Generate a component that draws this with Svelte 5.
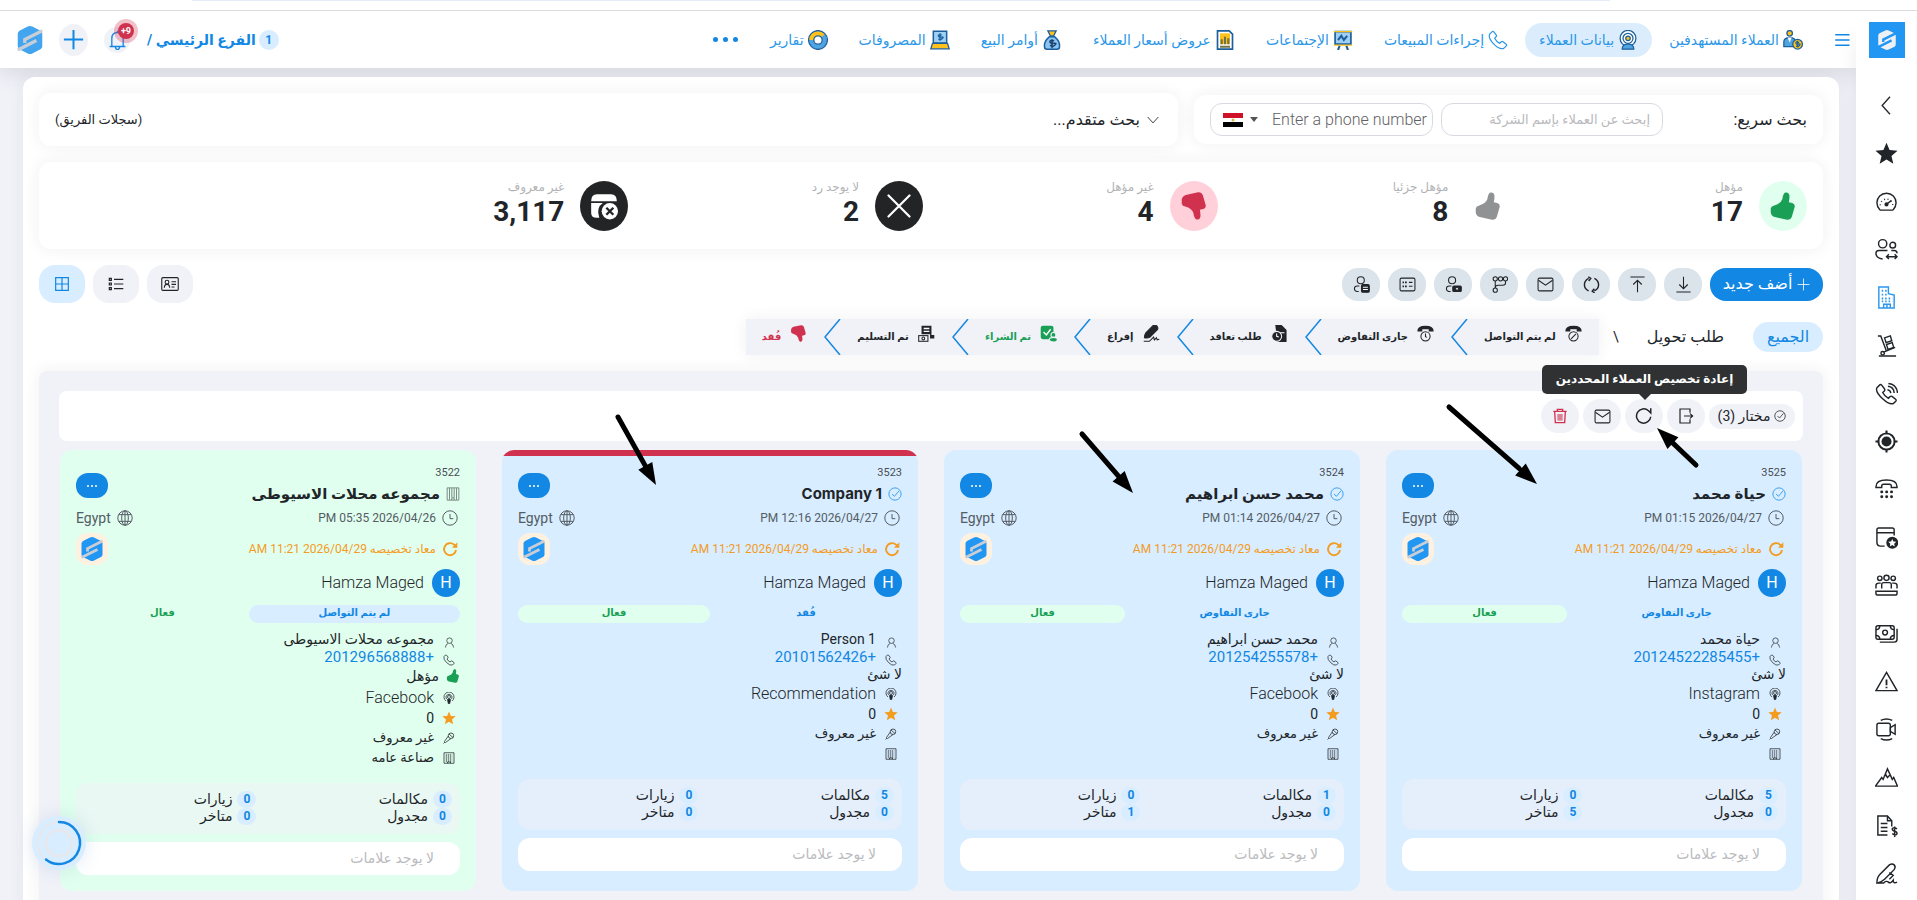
<script lang="ts">
	type Nav = { label: string; icon: string; active?: boolean };

	const icons: Record<string, string> = {
		chevronLeft: '<path d="M16 2 7 12l9 10"/>',
		chevronDown: '<path d="m3 7 9 10 9-10"/>',
		star: '<path fill="currentColor" stroke="none" d="m12 .8 3.2 7.6 8.3.7-6.3 5.4 1.9 8.1-7.1-4.3-7.1 4.3 1.9-8.1L.5 9.1l8.3-.7z"/>',
		gauge: '<path d="M5 20.500A10 10 0 1 1 19 20.500Q18.500 21 17 21H7Q5.500 21 5 20.500z"/><path d="m12 15 5-4"/><circle cx="12" cy="15" r="1.400" fill="currentColor"/><path stroke-dasharray="1 2.700" d="M5.500 16a6.500 6.500 0 1 1 13 0"/>',
		users: '<circle cx="8" cy="6" r="4.300"/><circle cx="18.500" cy="7.500" r="3"/><path d="M13 13H4q-3 0-3 3 0 5 7 6M17 13h3q3 0 3 3M12 19.500h11M14.500 17 12 19.500l2.500 2.500M20.500 17l2.500 2.500-2.500 2.500"/>',
		building: '<path d="M4 1h10v7l6 1.500V23H4zM9 23v-4h7v4M12.500 19v4"/><path stroke-width="2" stroke-dasharray="1.600 2" d="M7 5h7M7 9h7M7 13h11M7 16h11"/>',
		cart: '<path d="M3 2h3l6 16M4 23h18M9 19l12-5"/><circle cx="8" cy="20" r="1.800"/><path d="m10 4 6-2 1.500 5-6 2zM12 11l6-2 1.500 5-6 2z"/>',
		callWave: '<path d="M2 6 5 3q1-.8 2 .3l3 4q.6 1-.3 2L8 11q2 4 6 6l1.700-1.800q1-.8 2-.2l3.800 3q1 1 .2 2l-2.700 2.500Q15 24 8 17.500 0 10 2 6zM13 8q3 .3 3.500 3.500M13.500 4.500q6 .5 6.500 7M14 1.500q8.500.7 9.500 10"/>',
		target: '<circle cx="12" cy="12" r="8.500" stroke-width="2"/><circle cx="12" cy="12" r="4.500" fill="currentColor"/><path stroke-width="2.200" d="M12 .5v4M12 19.500v4M.5 12h4M19.500 12h4"/>',
		deskPhone: '<path d="M1 9q0-7 11-7t11 7v1h-6V8q0-1.500-2-1.500H9Q7 6.500 7 8v2H1z"/><path stroke-width="3" stroke-linecap="round" stroke-dasharray=".1 5" d="M7 14.500h11M7 19.500h11"/>',
		boxStar: '<path d="M10 21H6q-4 0-4-4V4q0-2 2-2h14q2 0 2 2v6M2 7h18"/><circle cx="18" cy="17.500" r="5.500" fill="currentColor"/><path fill="#fff" stroke="none" d="m18 13.500 1.200 2.700 3 .3-2.200 2 .6 3-2.600-1.600-2.600 1.600.6-3-2.200-2 3-.3z"/>',
		team: '<circle cx="5" cy="4.500" r="2.300"/><circle cx="12" cy="4" r="2.700"/><circle cx="19" cy="4.500" r="2.300"/><path d="M1 15v-3q0-2.500 3-2.500h2M23 15v-3q0-2.500-3-2.500h-2M7 15v-4q0-2 2-2h6q2 0 2 2v4M1 18h22v2q0 2-2 2H3q-2 0-2-2z"/>',
		money: '<rect x="1" y="4" width="19" height="14" rx="2"/><circle cx="10.500" cy="11" r="2.500"/><path d="M1 8q4 0 4-4M1 14q4 0 4 4M20 8q-4 0-4-4M20 14q-4 0-4 4M23 7v11q0 3-3 3H5"/>',
		warning: '<path d="M12 2.500 23 21.500H1z"/><path stroke-width="1.900" d="M12 10v6M12 17.500v1.500"/>',
		video: '<rect x="2" y="5.500" width="14" height="13" rx="2"/><path d="m16 10 5-3v10l-5-3zM6 2.500q6-3 12 0M6 21.500q6 3 12 0"/>',
		mountain: '<path d="M.5 21 7 12l1.500 2L13 3l5 11 1.500-2 4 9zM9 11l2.500-1.500L13 12l2.500-2.500L17 11"/>',
		invoice: '<path d="M13 22H3V2h10l4.500 5v6M13 2v5h4.500M6 10h7M6 14h7M6 18h7M23 15.500q-4-2.500-5 0 0 2 2.500 2.500T23 20.500q-1 2.500-5 0M20.500 13v11"/>',
		pen: '<path d="M2 22q0-6 3-9L15 3q3-2 5 0t0 5L10 18q-3 3-8 4zM15 11l4 3-4 4M2 22h7q3-3 5-1t5-2q0 4 4 2"/>',
		menu: '<path stroke-width="2" d="M3 5h19M3 12h19M3 19h19"/>',
		plus: '<path d="M12 1v22M1 12h22"/>',
		bell: '<path d="M3 20h18M5.500 20v-9q0-7 6.500-7t6.500 7v9M12 2v2M9.500 20.500q.5 3 2.500 3t2.500-3"/>',
		phone: '<path d="M2 5 5 2q1-.8 2 .3L10 6q.6 1-.3 2L8 10q2 4 6 6l2-1.800q1-.8 2-.2l3.800 3q1 1 .2 2l-3 3Q14 24 7 17 0 10 2 5z"/>',
		download: '<path d="M12 1v17M6 12l6 6 6-6M2 22.500h20"/>',
		upload: '<path d="M12 23V6M6 12l6-6 6 6M2 1.500h20"/>',
		sync: '<path stroke-width="2" d="M8 3.500q-6 3-6 9t6 8.500M16 3.500q6 3 6 9T16 21M7.500 1 11 3.500 8 7M16.500 24 13 21.500l3-3.500"/>',
		mail: '<rect x="1.500" y="3" width="21" height="18" rx="2"/><path d="m2 6 10 7 10-7"/>',
		branch: '<circle cx="6" cy="4" r="3"/><circle cx="6" cy="20" r="3"/><circle cx="13.500" cy="4" r="3"/><circle cx="20.500" cy="4" r="3"/><path d="M6 7v10M20.500 7v3q0 3-4 3H10q-4 0-4 4"/>',
		userCam: '<circle cx="10" cy="6" r="5"/><path d="M9 14H6q-4 0-4 4t6 4"/><rect x="11" y="14" width="12" height="8" rx="1.500" fill="currentColor"/><circle cx="17" cy="18" r="2" fill="#fff"/>',
		userDoc: '<circle cx="11" cy="6" r="5"/><path d="M9 14H6q-4 0-4 4t6 4"/><rect x="12" y="12" width="11" height="11" rx="2" fill="currentColor"/><path stroke="#fff" d="M14 16h7M14 19h7"/>',
		idLines: '<rect x="1.500" y="3" width="21" height="18" rx="2"/><path stroke-width="2.500" d="M5 9h2M8.500 9h2.500M5 14.500h2M8.500 14.500h2.500"/><path d="M14 9h5M14 14.500h5"/>',
		idCard: '<rect x="1" y="3.500" width="22" height="17" rx="1.500"/><circle cx="8" cy="9.500" r="2.500"/><path d="M4.500 17q0-4.500 3.500-4.500t3.500 4.500M14 9h6M14 12.500h6M14 16h4"/>',
		list: '<path stroke-width="1.800" d="M9 5h14M9 12h14M9 19h14M2 3.500h3v3H2zM2 10.500h3v3H2zM2 17.500h3v3H2z"/>',
		grid: '<path stroke-width="1.800" d="M2.500 2.500h19v19h-19zM12 2.500v19M2.500 12h19"/>',
		thumb: '<path fill="currentColor" stroke="none" d="M14 .5q3-.8 3.500 2.200.2 3-.5 6l3 .7q2.500.8 2 3.500l-2.500 8.500q-1 2.800-4 2.300L5 21.500q-3-.8-3.500-4V14q.5-2 3-2.500Q10 10 11.500 6 12 1.500 14 .5z"/>',
		close: '<path stroke-width="2.200" stroke-linecap="round" d="m1.500 1.500 21 21M22.500 1.500l-21 21"/>',
		boxClose: '<path fill="currentColor" stroke="none" d="M1 8q0-6 5-6h12q5 0 5 6zM1 9.500h10q-6 4-3 12.500-7 1-7-4z"/><circle cx="17" cy="16.500" r="7" fill="currentColor" stroke="none"/><path stroke="#222426" stroke-width="2" d="m14 13.500 6 6M20 13.500l-6 6"/>',
		phoneBan: '<path fill="currentColor" stroke="none" d="M.5 9Q0 1 12 1t11.500 8h-7V6h-9v3z"/><circle cx="12" cy="16" r="6.500"/><path d="m8.500 19.500 7-7"/>',
		phoneTime: '<path fill="currentColor" stroke="none" d="M.5 9Q0 1 12 1t11.500 8h-7V6h-9v3z"/><circle cx="12" cy="16" r="6.500"/><path d="M12 12v4.500l2 1"/>',
		docTime: '<path fill="currentColor" stroke="none" d="M6 0h9l7 7v17H9z"/><circle cx="8" cy="16" r="7" fill="currentColor" stroke="#f1f2f8"/><path stroke="#fff" d="M8 12v4l3 1M13 11h6"/>',
		penFill: '<path fill="currentColor" d="M2 18q0-4 2-7L14 1q4-2 6 1t0 5L10 17q-3 2-8 1z"/><path d="M1 23h8l6-6 1 4 3-3 1 3 3-1"/>',
		docCheck: '<rect x="1" y="1" width="18" height="19" rx="3" fill="currentColor" stroke="none"/><path stroke="#fff" stroke-width="2" d="m5 10 4 4 6-8"/><circle cx="19" cy="14" r="3.500" fill="currentColor" stroke="#f1f2f8"/><path fill="currentColor" stroke="#f1f2f8" d="M13 21q0-3.500 6-3.500t5.500 3.500-5.500 3-6-3z"/>',
		docMoney: '<path fill="currentColor" stroke="none" d="M5 1h14v13h4v5h-6v-6H5z"/><path stroke="#fff" stroke-width="2" d="M8 5h8M8 9h8"/><rect x="1" y="15" width="13" height="8"/><circle cx="7.500" cy="19" r="2"/>',
		check: '<circle cx="12" cy="12" r="10.500"/><path d="m7 12 4 4L19 6.500"/>',
		exit: '<path stroke-width="1.800" d="M18 7V1.500H3v21h15V17M9 12h13M18 8.500l4 3.500-4 3.500"/>',
		refresh: '<path stroke-width="2" d="M21 13a9.500 9.500 0 1 1-3-8l3 3V1.500"/>',
		refreshBold: '<path stroke-width="2.800" d="M21 13.500a9 9 0 1 1-3-8L21 9"/><path fill="currentColor" stroke="none" d="M23 2v8h-8z"/>',
		trash: '<path stroke-width="2" d="M2 5h20M8 5V2h8v3M4 5l1 17h14l1-17"/><path fill="currentColor" fill-opacity=".6" stroke="none" d="M8 9h8v10H8z"/>',
		clock: '<circle cx="12" cy="12" r="10.800"/><path d="M12 6v7h5"/>',
		globe: '<circle cx="12" cy="12" r="10.800"/><ellipse cx="12" cy="12" rx="5" ry="10.800"/><path d="M12 1v22M2.500 7h19M2.500 17h19"/>',
		person: '<circle cx="12" cy="8" r="6"/><path d="M3 23q1-8 6-9M21 23q-1-8-6-9"/>',
		podcast: '<circle cx="12" cy="10" r="3"/><path d="M7 14a6 6 0 1 1 10 0M6 18a10 10 0 1 1 12 0"/><path fill="currentColor" d="m9 15 3-1 3 1-1.500 8h-3z"/>',
		mic: '<circle cx="16" cy="7.500" r="5.500"/><path d="M10.500 8 3 19v2h2l11-8M12 4l8 7M3 21l-2 2"/>',
		office: '<path d="M2 1.500h20v21H2z"/><path stroke-width="2" stroke-dasharray="2.500 1.500" d="M5.500 6h13M5.500 10h13M5.500 14h13M5.500 18h13"/><path d="M9 22.500V20h6v2.500"/>',
		tower: '<path d="M2 1.500h20v21H2zM6 2v20M10 2v16M14 2v16M18 2v20M10 22.500v-4h4v4"/>',
		leads: '<circle cx="8" cy="4" r="3.300" fill="#ffc21a" stroke="#1c5f9c"/><path fill="#4fa5e2" stroke="#1c5f9c" d="M1 20v-6q0-5 7-5t7 5v6z"/><path fill="#fff" stroke="none" d="m5.500 9 2.500 6 2.500-6z"/><circle cx="17.500" cy="17" r="5.800" fill="#ffc21a" stroke="#1c5f9c"/><path stroke="#1c5f9c" d="M19.500 15q-4-1.500-4 .5t3.500 1.500-1 3l-2.500-.6M17.500 13v8"/>',
		data: '<circle cx="12" cy="10" r="9.500" fill="#fff" stroke="#1c5f9c"/><circle cx="12" cy="10" r="6" stroke="#1c5f9c"/><circle cx="12" cy="10" r="2.700" fill="#ffc21a" stroke="#1c5f9c"/><path fill="#4fa5e2" stroke="#1c5f9c" d="M5 23q0-6 7-6t7 6z"/>',
		board: '<path fill="#9ed0f5" stroke="#1c5f9c" stroke-width="2" d="M2.500 2h19v15h-19z"/><path stroke="#ffc21a" stroke-width="1.500" d="M1 2h22M1 18h22"/><path stroke="#1c5f9c" stroke-width="2.500" d="m6 12 4-5 3 5 4-5M8 19l-2 5M16 19l2 5"/>',
		quote: '<path fill="#fff" stroke="#1c5f9c" stroke-width="2" d="M3 1h14l4 4v18H3z"/><path fill="#ffc21a" stroke="none" d="M6 4h12v13H6z"/><path stroke="#6f7448" stroke-width="2.500" d="M8 17v-6M12 17V8M16 17v-7M6 20h12"/>',
		bag: '<path fill="#ffc21a" stroke="#1c5f9c" d="M7 1h10l-3 6h-4z"/><path fill="#8ac6f3" stroke="#1c5f9c" stroke-width="1.800" d="M9 8h6q7 6 6 12 0 3-3 3H6q-3 0-3-3Q2 14 9 8z"/><path stroke="#1c3f6c" stroke-width="1.800" d="M14.500 13q-5-1.500-5 1t5 2-1 3.500l-4-.8M12 11v11"/>',
		laptop: '<path fill="#9ed0f5" stroke="#1c5f9c" stroke-width="1.800" d="M4 1.500h16v14H4z"/><path fill="#ffc21a" stroke="#1c5f9c" d="M3 16h18l2 6.500H1z"/><path stroke="#1c5f9c" stroke-width="1.600" d="M14 6q-4-1-4 1t4 1.500-1 3l-3-.5M12 4v9"/>',
		report: '<circle cx="12" cy="12" r="8" stroke="#4fa5e2" stroke-width="6"/><path stroke="#ffc21a" stroke-width="6" d="M4 12a8 8 0 0 1 14-5"/><circle cx="12" cy="12" r="11.300" stroke="#1c5f9c"/><circle cx="12" cy="12" r="5" fill="#fff" stroke="#1c5f9c"/>'
	};

	const sideIcons = ['chevronLeft', 'star', 'gauge', 'users', 'building', 'cart', 'callWave', 'target', 'deskPhone', 'boxStar', 'team', 'money', 'warning', 'video', 'mountain', 'invoice', 'pen'];

	const nav: Nav[] = [
		{ label: 'العملاء المستهدفين', icon: 'leads' },
		{ label: 'بيانات العملاء', icon: 'data', active: true },
		{ label: 'إجراءات المبيعات', icon: 'phone' },
		{ label: 'الإجتماعات', icon: 'board' },
		{ label: 'عروض أسعار العملاء', icon: 'quote' },
		{ label: 'أوامر البيع', icon: 'bag' },
		{ label: 'المصروفات', icon: 'laptop' },
		{ label: 'تقارير', icon: 'report' }
	];

	const totals = [
		{ label: 'مؤهل', value: '17', icon: 'thumb', tone: 'good' },
		{ label: 'مؤهل جزئيا', value: '8', icon: 'thumb', tone: 'partial' },
		{ label: 'غير مؤهل', value: '4', icon: 'thumb', tone: 'bad' },
		{ label: 'لا يوجد رد', value: '2', icon: 'close', tone: 'dark' },
		{ label: 'غير معروف', value: '3,117', icon: 'boxClose', tone: 'dark' }
	];

	const tools = ['download', 'upload', 'sync', 'mail', 'branch', 'userCam', 'idLines', 'userDoc'];

	const stages = [
		{ label: 'لم يتم التواصل', icon: 'phoneBan', tone: '' },
		{ label: 'جارى التفاوض', icon: 'phoneTime', tone: '' },
		{ label: 'طلب تعاقد', icon: 'docTime', tone: '' },
		{ label: 'إفراغ', icon: 'penFill', tone: '' },
		{ label: 'تم الشراء', icon: 'docCheck', tone: 'won' },
		{ label: 'تم التسليم', icon: 'docMoney', tone: '' },
		{ label: 'فُقد', icon: 'thumb', tone: 'lost' }
	];

	// arrow: [from x, from y, tip x, tip y], measured from the card's top left corner
	const clients = [
		{ id: 3525, name: 'حياة محمد', time: '2026/04/27 01:15 PM', stage: 'جارى التفاوض', share: 57, person: 'حياة محمد', phone: '+20124522285455', source: 'Instagram', field: '', selected: true, lost: false, qualified: false, counts: [5, 0, 0, 5], arrow: [63, -43, 151, 34] },
		{ id: 3524, name: 'محمد حسن ابراهيم', time: '2026/04/27 01:14 PM', stage: 'جارى التفاوض', share: 57, person: 'محمد حسن ابراهيم', phone: '+201254255578', source: 'Facebook', field: '', selected: true, lost: false, qualified: false, counts: [1, 0, 0, 1], arrow: [138, -16, 189, 43] },
		{ id: 3523, name: 'Company 1', time: '2026/04/27 12:16 PM', stage: 'فُقد', share: 50, person: 'Person 1', phone: '+20101562426', source: 'Recommendation', field: '', selected: true, lost: true, qualified: false, counts: [5, 0, 0, 0], arrow: [116, -33, 154, 35] },
		{ id: 3522, name: 'مجموعه محلات الاسيوطى', time: '2026/04/26 05:35 PM', stage: 'لم يتم التواصل', share: 55, person: 'مجموعه محلات الاسيوطى', phone: '+201296568888', source: 'Facebook', field: 'صناعة عامه', selected: false, lost: false, qualified: true, counts: [0, 0, 0, 0], arrow: null }
	];

	let companyQuery = $state('');
	let phoneQuery = $state('');

	function arrowHead(a: number[]) {
		const len = Math.hypot(a[2] - a[0], a[3] - a[1]);
		const ux = (a[2] - a[0]) / len;
		const uy = (a[3] - a[1]) / len;
		const bx = a[2] - ux * 22;
		const by = a[3] - uy * 22;
		return `${a[2]},${a[3]} ${bx - uy * 8},${by + ux * 8} ${bx + uy * 8},${by - ux * 8}`;
	}
</script>

{#snippet icon(name: string, size = 16)}
	<svg width={size} height={size} viewBox="0 0 24 24" fill="none" stroke="currentColor" stroke-width="1.5" aria-hidden="true">{@html icons[name]}</svg>
{/snippet}

{#snippet hexLogo(size: number, fill = '#2196f3', stripe = '#c9ced6')}
	<svg width={size} height={size} viewBox="0 0 24 24" aria-hidden="true">
		<path {fill} d="M12 0q1 0 2 .5l7 3.500q1.500 1 1.500 2.500v11q0 1.500-1.500 2.500l-7 3.500q-2 1-4 0L3 20q-1.500-1-1.500-2.500v-11Q1.500 5 3 4L10 .5q1-.5 2-.5z" />
		<path fill="none" stroke={stripe} stroke-width="2.8" d="M22.500 4 7.500 11.500v3M1.500 20.500l16-8" />
	</svg>
{/snippet}

{#snippet arrow(a: number[])}
	<svg class="arrow" width="1" height="1" aria-hidden="true">
		<line x1={a[0]} y1={a[1]} x2={a[2] - (a[2] - a[0]) * 0.2} y2={a[3] - (a[3] - a[1]) * 0.2} stroke="#000" stroke-width="5" stroke-linecap="round" />
		<polygon points={arrowHead(a)} />
	</svg>
{/snippet}

<div class="page" dir="rtl">
	<div class="window-edge"><span></span></div>
	<div class="shell">
		<aside class="sidebar">
			<a class="brand" href="#home" aria-label="Home">{@render hexLogo(20, '#eef1f4', '#2196f3')}</a>
			<nav>
				{#each sideIcons as name}
					<a href="#{name}" class:current={name === 'building'} aria-label={name}>{@render icon(name, name === 'chevronLeft' ? 21 : 23)}</a>
				{/each}
			</nav>
		</aside>

		<div class="content">
			<header>
				<button type="button" class="menu" aria-label="menu">{@render icon('menu', 18)}</button>
				<nav class="main-nav">
					{#each nav as item}
						<a href="#{item.icon}" class:active={item.active}>{@render icon(item.icon, 20)}<span>{item.label}</span></a>
					{/each}
				</nav>
				<button type="button" class="more" aria-label="more"><i></i><i></i><i></i></button>
				<div class="account">
					<span class="branch-count">1</span>
					<strong>الفرع الرئيسي /</strong>
					<button type="button" class="bell" aria-label="notifications">{@render icon('bell', 21)}<span class="alert">9+</span></button>
					<button type="button" class="create" aria-label="add">{@render icon('plus', 21)}</button>
					<span class="avatar">{@render hexLogo(28, '#43a5f0')}</span>
				</div>
			</header>

			<main>
				<div class="search-row">
					<section class="box quick">
						<label for="company">بحث سريع:</label>
						<input id="company" type="text" placeholder="إبحث عن العملاء بإسم الشركة" bind:value={companyQuery} />
						<div class="phone-field" dir="ltr">
							<button type="button" aria-label="Egypt">
								<svg width="20" height="14" viewBox="0 0 20 14" aria-hidden="true">
									<path fill="#ce1126" d="M0 0h20v5H0z" /><path fill="#fff" d="M0 5h20v4H0z" /><path d="M0 9h20v5H0z" /><circle cx="10" cy="7" r="1.5" fill="#d9b24c" />
								</svg>
								<i class="caret"></i>
							</button>
							<input type="tel" placeholder="Enter a phone number" aria-label="phone" bind:value={phoneQuery} />
						</div>
					</section>
					<section class="box advanced">
						<button type="button">{@render icon('chevronDown', 14)}بحث متقدم...</button>
						<span>(سجلات الفريق)</span>
					</section>
				</div>

				<section class="box totals">
					{#each totals as total}
						<div class="total">
							<span class="total-icon {total.tone}">{@render icon(total.icon, total.icon === 'close' ? 24 : 28)}</span>
							<div>
								<small>{total.label}</small>
								<b>{total.value}</b>
							</div>
						</div>
					{/each}
				</section>

				<div class="toolbar">
					<button type="button" class="add">{@render icon('plus', 13)}أضف جديد</button>
					{#each tools as tool}
						<button type="button" class="tool" aria-label={tool}>{@render icon(tool, 17)}</button>
					{/each}
					<div class="views">
						<button type="button" aria-label="cards">{@render icon('idCard', 18)}</button>
						<button type="button" aria-label="list">{@render icon('list', 16)}</button>
						<button type="button" class="on" aria-label="grid">{@render icon('grid', 16)}</button>
					</div>
				</div>

				<div class="filters">
					<button type="button" class="all">الجميع</button>
					<button type="button" class="transfer">طلب تحويل</button>
					<span class="slash">\</span>
					<div class="stages">
						{#each stages as stage, i}
							{#if i > 0}
								<svg class="step" width="17" height="36" viewBox="0 0 17 36" fill="none" stroke="#1287e3" stroke-width="1.5" aria-hidden="true"><path d="M16 0 1 18l15 18" /></svg>
							{/if}
							<button type="button" class="stage {stage.tone}">{@render icon(stage.icon, 17)}<span>{stage.label}</span></button>
						{/each}
					</div>
				</div>

				<section class="board">
					<div class="bulk">
						<button type="button" class="picked">{@render icon('check', 12)}مختار (3)</button>
						<button type="button" aria-label="exit">{@render icon('exit', 16)}</button>
						<div class="tip-anchor">
							<button type="button" aria-label="reassign">{@render icon('refresh', 18)}</button>
							<span class="tooltip" role="tooltip">إعادة تخصيص العملاء المحددين</span>
							{@render arrow([71, 66, 32, 29])}
						</div>
						<button type="button" aria-label="mail">{@render icon('mail', 17)}</button>
						<button type="button" class="danger" aria-label="delete">{@render icon('trash', 16)}</button>
					</div>

					<div class="cards">
						{#each clients as client}
							<article class="card" class:selected={client.selected} class:lost={client.lost}>
								<div class="card-head">
									<div>
										<small>{client.id}</small>
										<h3>{@render icon(client.selected ? 'check' : 'tower', 14)}{client.name}</h3>
									</div>
									<button type="button" class="dots" aria-label="options"><i></i><i></i><i></i></button>
								</div>
								<div class="line time">
									<span>{@render icon('clock', 16)}{client.time}</span>
									<span class="country">{@render icon('globe', 16)}Egypt</span>
								</div>
								<div class="line reassigned">
									<span>{@render icon('refreshBold', 16)}معاد تخصيصه 2026/04/29 11:21 AM</span>
									<span class="team-logo">{@render hexLogo(24)}</span>
								</div>
								<div class="owner"><span>H</span>Hamza Maged</div>
								<div class="status">
									<span class="stage-pill" style="width: {client.share}%">{client.stage}</span>
									<span class="active-pill">فعال</span>
								</div>
								<ul class="details">
									<li class="tight"><span class="slot low">{@render icon('person', 11)}</span>{client.person}</li>
									<li class="tight phone"><span class="slot low">{@render icon('phone', 12)}</span><a href="tel:{client.phone}">{client.phone}</a></li>
									{#if client.qualified}
										<li class="qualified"><span class="thumb">{@render icon('thumb', 14)}</span>مؤهل</li>
									{:else}
										<li class="none">لا شئ</li>
									{/if}
									<li class="source"><span class="slot">{@render icon('podcast', 12)}</span>{client.source}</li>
									<li class="rating"><span class="slot gold">{@render icon('star', 14)}</span>0</li>
									<li><span class="slot">{@render icon('mic', 12)}</span>غير معروف</li>
									<li><span class="slot">{@render icon('office', 12)}</span>{client.field}</li>
								</ul>
								<div class="counts">
									<span><b>{client.counts[0]}</b>مكالمات</span>
									<span><b>{client.counts[1]}</b>زيارات</span>
									<span><b>{client.counts[2]}</b>مجدول</span>
									<span><b>{client.counts[3]}</b>متاخر</span>
								</div>
								<div class="tags">لا يوجد علامات</div>
								{#if client.arrow}
									{@render arrow(client.arrow)}
								{/if}
							</article>
						{/each}
					</div>
				</section>
			</main>
		</div>
	</div>

	<button type="button" class="loader" aria-label="progress">
		<svg width="54" height="54" viewBox="0 0 54 54" fill="none" aria-hidden="true">
			<circle cx="27" cy="27" r="21" stroke="#e6e8ee" stroke-width="2" />
			<circle cx="27" cy="27" r="13" stroke="#e6e8ee" stroke-width="3" />
			<path d="M27 6a21 21 0 1 1-13 37.500" stroke="#1287e3" stroke-width="2.5" stroke-linecap="round" />
		</svg>
	</button>
</div>

<style>
	:global(body) { margin: 0; background: #f1f2f8; }
	.page, .page * { box-sizing: border-box; }
	.page { height: 100vh; overflow: hidden; display: flex; flex-direction: column; font-family: Roboto, 'DejaVu Sans', sans-serif; font-size: 14px; line-height: 20px; color: #212529; }
	svg { display: block; flex: none; }
	button { font: inherit; color: inherit; border: 0; padding: 0; background: none; cursor: pointer; display: flex; align-items: center; justify-content: center; flex: none; white-space: nowrap; }
	a { color: inherit; text-decoration: none; }

	.window-edge { flex: none; height: 11px; background: #fff; border-bottom: 1px solid #dcdddf; position: relative; z-index: 2; }
	.window-edge span { display: block; height: 1px; margin: 0 16% 0 10%; background: #e6edf9; }
	.shell { flex: 1; min-height: 0; display: flex; }

	.sidebar { width: 61px; flex: none; background: #fff; padding-top: 11px; display: flex; flex-direction: column; align-items: center; z-index: 2; box-shadow: 0 30px 20px rgba(60, 64, 90, 0.1); }
	.brand { width: 36px; height: 36px; background: #2196f3; display: flex; align-items: center; justify-content: center; margin-bottom: 23px; }
	.sidebar nav a { height: 48px; display: flex; align-items: center; justify-content: center; }
	.sidebar nav .current { color: #2b97ee; }

	.content { flex: 1; min-width: 0; }
	header { height: 57px; background: #fff; box-shadow: 0 2px 24px rgba(50, 50, 75, 0.18); display: flex; align-items: center; padding: 0 5px 0 16px; }
	.menu { width: 18px; color: #1287e3; }
	.main-nav { display: flex; gap: 3px; margin-right: 16px; }
	.main-nav a { height: 34px; padding: 0 14px; border-radius: 17px; display: flex; align-items: center; gap: 4px; font-size: 14px; color: #2b97e8; white-space: nowrap; }
	.main-nav .active { background: #dbedfc; }
	.more { gap: 5px; margin-right: 18px; }
	.more i { width: 5px; height: 5px; border-radius: 50%; background: #1287e3; }
	.account { margin-right: auto; display: flex; align-items: center; color: #1287e3; }
	.account strong { font-size: 14px; white-space: nowrap; margin: 0 3px 0 17px; }
	.branch-count { width: 20px; height: 20px; border-radius: 10px; background: #d8edff; text-align: center; font-weight: 700; font-size: 12px; }
	.bell { position: relative; width: 26px; height: 26px; border-radius: 50%; background: #f1f2f8; }
	.alert { position: absolute; top: -4px; right: -4px; width: 16px; height: 16px; border-radius: 50%; background: #d0314f; box-shadow: 0 0 0 4px rgba(208, 49, 79, 0.3); color: #fff; font-size: 9px; line-height: 16px; font-weight: 700; }
	.create { width: 29px; height: 32px; border-radius: 50%; background: #f1f2f8; margin: 0 16px 0 15px; }
	.create :global(svg) { stroke-width: 2.3; }

	main { margin: 9px 17px 0 23px; padding: 16px 16px 0; background: #fff; border-radius: 12px; box-shadow: 0 0 16px rgba(50, 50, 75, 0.06); }
	.box { background: #fff; border-radius: 12px; box-shadow: 0 0 16px rgba(40, 40, 60, 0.07); }
	.search-row { display: flex; align-items: center; gap: 16px; }
	.quick { width: 629px; height: 49px; flex: none; display: flex; align-items: center; gap: 8px; padding: 0 16px; }
	.quick label { flex: 1; font-size: 16px; }
	.quick input { font: inherit; font-size: 14px; color: #212529; outline: none; }
	.quick input::placeholder { color: #b9b9bd; opacity: 1; }
	#company { width: 222px; height: 33px; border: 1px solid #d8dae2; border-radius: 12px; padding: 0 12px; background: #fff; font-size: 13px; }
	.phone-field { width: 223px; height: 33px; border: 1px solid #d8dae2; border-radius: 12px; display: flex; align-items: center; padding: 0 4px 0 12px; gap: 14px; }
	.phone-field button { gap: 7px; }
	.phone-field input { flex: 1; min-width: 0; border: 0; padding: 0; font-size: 16px; font-weight: 300; background: none; }
	.phone-field input::placeholder { color: #5f6164; }
	.caret { border: 4px solid transparent; border-top: 5px solid #555; border-bottom: 0; }
	.advanced { flex: 1; height: 53px; display: flex; align-items: center; justify-content: space-between; padding: 0 18px 0 16px; }
	.advanced button { gap: 6px; font-size: 16px; }
	.advanced span { font-size: 13px; }

	.totals { margin-top: 16px; height: 87px; padding-right: 16px; display: grid; grid-template-columns: repeat(6, 1fr); align-items: center; }
	.total { display: flex; align-items: center; gap: 16px; }
	.total-icon { width: 48px; height: 50px; border-radius: 50%; display: flex; align-items: center; justify-content: center; }
	.good { background: #e1ffef; color: #1a9f56; }
	.partial { color: #909294; }
	.bad { background: #ffd0d9; color: #d0314f; }
	.bad :global(svg), .stage.lost :global(svg) { transform: scaleY(-1); }
	.dark { background: #222426; color: #fff; }
	.total > div { padding-bottom: 6px; }
	.total small { display: block; font-size: 12px; line-height: 18px; color: #b2b3b6; }
	.total b { display: block; font-size: 28px; line-height: 32px; }

	.toolbar { margin-top: 16px; height: 38px; display: flex; align-items: center; gap: 8px; }
	.add { width: 113px; height: 33px; border-radius: 16px; background: #1287e3; color: #fff; font-size: 16px; gap: 5px; }
	.tool { width: 38px; height: 33px; border-radius: 16px; background: #dbe3eb; }
	.views { margin-right: auto; display: flex; gap: 8px; }
	.views button { width: 46px; height: 38px; border-radius: 16px; background: #f1f2f8; }
	.views .on { background: #d8edff; color: #1287e3; }

	.filters { margin-top: 16px; height: 36px; display: flex; align-items: center; }
	.all { width: 70px; height: 30px; border-radius: 15px; background: #d8edff; color: #1287e3; font-size: 16px; }
	.transfer { margin: 0 29px 0 28px; font-size: 16px; }
	.slash { width: 20px; }
	.stages { display: flex; background: #f1f2f8; box-shadow: 0 0 16px rgba(40, 40, 60, 0.07); }
	.stage { height: 36px; padding: 0 17px 0 16px; gap: 9px; font-size: 10px; font-weight: 700; }
	.stage :global(svg) { margin-bottom: 8px; }
	.won { color: #1a9f56; }
	.lost { color: #d0314f; }

	.board { margin-top: 16px; padding: 20px 20px 30px; background: #f1f2f8; border-radius: 8px; box-shadow: 0 0 16px rgba(40, 40, 60, 0.07); }
	.bulk { height: 50px; border-radius: 8px; background: #fff; padding: 0 8px; display: flex; align-items: center; gap: 4px; }
	.bulk button { width: 38px; height: 34px; border-radius: 17px; background: #f1f2f8; }
	.bulk .picked { width: 86px; height: 25px; border-radius: 12px; gap: 4px; font-size: 14px; }
	.bulk .danger { color: #d0314f; }
	.tip-anchor { position: relative; }
	.tooltip { position: absolute; left: 50%; bottom: 39px; width: 205px; height: 29px; margin-left: -102px; border-radius: 5px; background: #2f3133; color: #fff; font-size: 12px; font-weight: 700; line-height: 29px; text-align: center; white-space: nowrap; z-index: 3; }
	.tooltip::after { content: ''; position: absolute; left: 50%; top: 100%; margin-left: -6px; border: 6px solid transparent; border-top-color: #2f3133; border-bottom: 0; }
	.arrow { position: absolute; left: 0; top: 0; overflow: visible; z-index: 4; pointer-events: none; }

	.cards { margin-top: 9px; padding: 0 1px; display: grid; grid-template-columns: repeat(4, 1fr); gap: 26px; }
	.card { position: relative; min-width: 0; padding: 16px; border-radius: 12px; background: #e1ffef; color: #212529; }
	.card.selected { background: #d8edff; }
	.card.lost { background: linear-gradient(#d0314f 6px, #d8edff 6px); }
	.card-head { display: flex; justify-content: space-between; height: 42px; }
	.card-head small { display: block; font-size: 11px; line-height: 14px; color: #4a4f54; }
	.card-head h3 { margin: 0; height: 28px; display: flex; align-items: center; gap: 6px; font-family: Inter, 'DejaVu Sans', sans-serif; font-size: 15px; font-weight: 700; white-space: nowrap; }
	.card-head h3 :global(svg) { color: #2b97ee; }
	.card:not(.selected) h3 :global(svg) { color: #6d7a76; }
	.dots { width: 32px; height: 25px; margin-top: 7px; border-radius: 12px; background: #1287e3; gap: 2px; }
	.dots i { width: 2px; height: 2px; border-radius: 50%; background: #fff; }
	.line { display: flex; align-items: center; justify-content: space-between; font-size: 12px; }
	.line span { display: flex; align-items: center; gap: 6px; white-space: nowrap; }
	.time { height: 20px; padding-right: 2px; color: #545c64; }
	.time .country { font-size: 14px; }
	.reassigned { height: 32px; margin-top: 5px; padding-right: 2px; color: #f39c1f; }
	.reassigned .team-logo { width: 32px; height: 32px; border-radius: 12px; background: #fff1e0; justify-content: center; }
	.owner { margin-top: 4px; height: 28px; display: flex; align-items: center; gap: 8px; font-size: 16px; font-weight: 300; }
	.owner span { width: 28px; height: 28px; border-radius: 50%; background: #1287e3; color: #fff; line-height: 28px; font-weight: 400; text-align: center; }
	.status { margin-top: 8px; display: flex; font-size: 10px; font-weight: 700; line-height: 16px; text-align: center; }
	.status span { height: 18px; border-radius: 9px; }
	.stage-pill { background: #d8edff; color: #1287e3; }
	.active-pill { flex: 1; background: #e1ffef; color: #1a9f56; }
	.details { list-style: none; margin: 7px 0 0; padding: 0; font-size: 13px; }
	.details li { height: 20px; display: flex; align-items: center; gap: 4px; white-space: nowrap; }
	.details .tight { height: 18px; font-size: 14px; }
	.details .none { height: 16px; margin-bottom: 2px; font-size: 14px; }
	.details .qualified { height: 20px; margin-bottom: 2px; gap: 7px; font-size: 14px; }
	.details .phone a { color: #1287e3; font-size: 15px; }
	.details .source { font-size: 16px; font-weight: 300; }
	.details .rating { font-size: 14px; }
	.slot { width: 22px; display: flex; justify-content: center; }
	.low { padding-top: 6px; }
	.gold { color: #f39c1f; }
	.thumb { color: #1a9f56; }
	.counts { margin-top: 15px; height: 51px; padding: 8px 8px 9px 0; border-radius: 12px; background: rgba(241, 242, 248, 0.5); display: grid; grid-template-columns: 52% 1fr; font-size: 14px; line-height: 17px; }
	.counts span { display: flex; align-items: center; gap: 5px; }
	.counts b { width: 19px; height: 17px; border-radius: 9px; background: #d8edff; color: #1287e3; font-size: 12px; text-align: center; }
	.tags { margin-top: 8px; height: 33px; border-radius: 12px; background: #fff; padding: 0 26px; color: #babbbe; font-size: 14px; line-height: 33px; }

	.loader { position: fixed; left: 32px; bottom: 30px; width: 54px; height: 54px; border-radius: 50%; background: #d8edff; box-shadow: 0 0 20px rgba(18, 80, 160, 0.12); z-index: 5; }
</style>
